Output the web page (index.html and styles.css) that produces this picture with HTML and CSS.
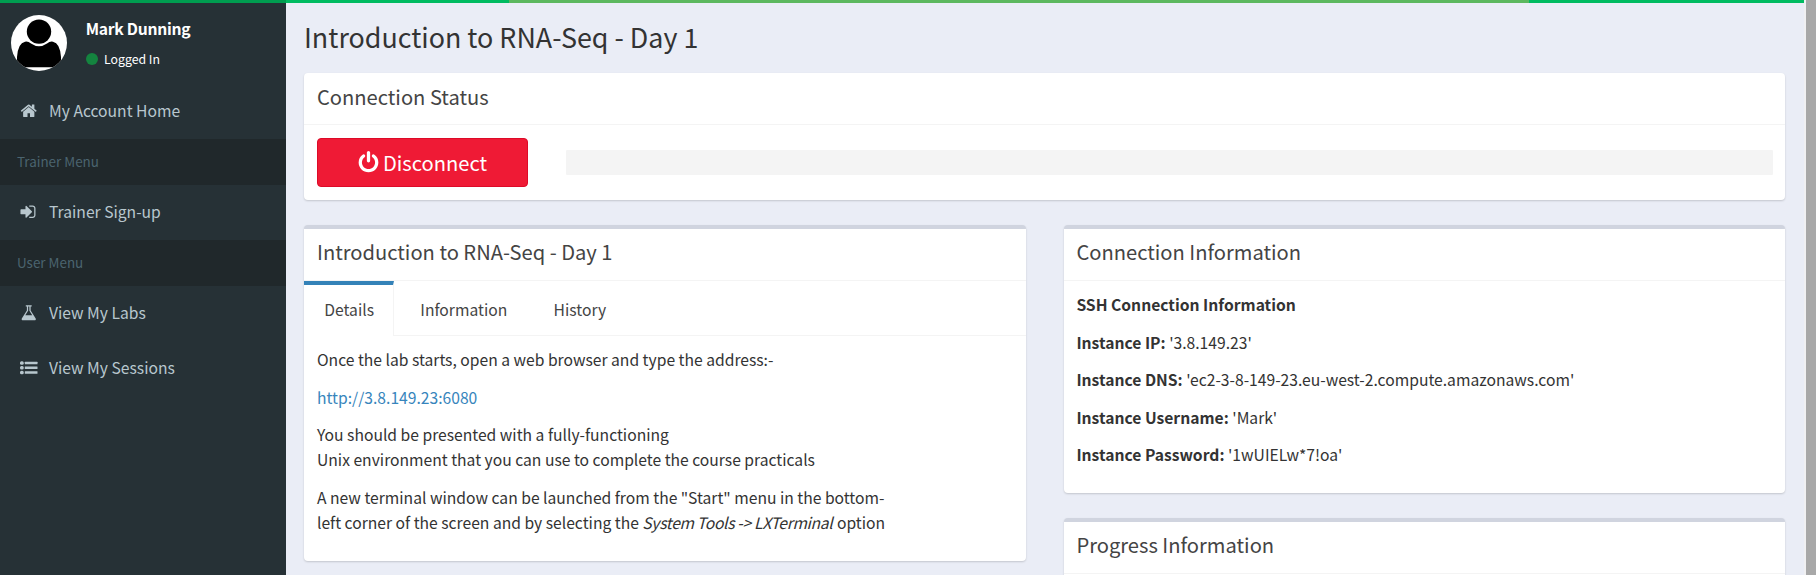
FILE: index.html
```html
<!DOCTYPE html>
<html lang="en">
<head>
<meta charset="utf-8">
<title>Introduction to RNA-Seq - Day 1</title>
<link rel="stylesheet" href="styles.css">
</head>
<body>
<div class="app">
  <div class="loadbar"><span class="seg seg-side"></span><span class="seg seg-a"></span><span class="seg seg-b"></span><span class="seg seg-c"></span></div>
  <aside class="sidebar">
    <div class="user-panel">
      <svg class="avatar" viewBox="0 0 56 56"><defs><clipPath id="round"><circle cx="28" cy="28" r="28"/></clipPath></defs><circle cx="28" cy="28" r="28" fill="#fff"/><g clip-path="url(#round)"><circle cx="28" cy="16.6" r="12.2"/><path d="M6 52.3V42Q7 28 14 26.7Q17 26 20 28.5Q28 34 36 28.5Q39 26 42 26.7Q49 28 50 42V52.3Z"/></g></svg>
      <div class="user-info">
        <p class="user-name">Mark Dunning</p>
        <p class="user-status"><i class="dot"></i>Logged In</p>
      </div>
    </div>
    <nav class="menu">
      <a class="item"><svg class="icon" viewBox="0 0 1792 1792"><path d="M1472 992v480q0 26-19 45t-45 19h-384v-384h-256v384h-384q-26 0-45-19t-19-45v-480q0-1 .5-3t.5-3l575-474 575 474q1 2 1 6zm223-69l-62 74q-8 9-21 11h-3q-13 0-21-7l-692-577-692 577q-12 8-24 7-13-2-21-11l-62-74q-8-10-7-23.5t11-21.5l719-599q32-26 76-26t76 26l244 204v-195q0-14 9-23t23-9h192q14 0 23 9t9 23v408l219 182q10 8 11 21.5t-7 23.5z"/></svg>My Account Home</a>
      <div class="group">Trainer Menu</div>
      <a class="item"><svg class="icon" viewBox="80 0 1792 1792"><path d="M1312 896q0 26-19 45l-544 544q-19 19-45 19t-45-19-19-45v-288h-448q-26 0-45-19t-19-45v-384q0-26 19-45t45-19h448v-288q0-26 19-45t45-19 45 19l544 544q19 19 19 45zm352-352v704q0 119-84.5 203.5t-203.5 84.5h-320q-13 0-22.5-9.5t-9.5-22.5q0-4-1-20t-.5-26.5 3-23.5 10-19.5 20.5-6.5h320q66 0 113-47t47-113v-704q0-66-47-113t-113-47h-312l-11.5-1-11.5-3-8-5.5-7-9-2-13.5q0-4-1-20t-.5-26.5 3-23.5 10-19.5 20.5-6.5h320q119 0 203.5 84.5t84.5 203.5z"/></svg>Trainer Sign-up</a>
      <div class="group">User Menu</div>
      <a class="item"><svg class="icon" viewBox="0 0 1792 1792"><path d="M1591 1448q56 89 21.5 152.5t-140.5 63.5h-1152q-106 0-140.5-63.5t21.5-152.5l503-793v-399h-64q-26 0-45-19t-19-45 19-45 45-19h512q26 0 45 19t19 45-19 45-45 19h-64v399zm-779-725l-272 429h712l-272-429-20-31v-436h-128v436z"/></svg>View My Labs</a>
      <a class="item"><svg class="icon" viewBox="0 0 1792 1792"><rect x="0" y="230" width="384" height="360" rx="160"/><rect x="0" y="716" width="384" height="360" rx="160"/><rect x="0" y="1202" width="384" height="360" rx="160"/><rect x="490" y="280" width="1302" height="260" rx="40"/><rect x="490" y="766" width="1302" height="260" rx="40"/><rect x="490" y="1252" width="1302" height="260" rx="40"/></svg>View My Sessions</a>
    </nav>
  </aside>
  <main class="content">
    <h1 class="page-title">Introduction to RNA-Seq - Day 1</h1>
    <section class="box box-status">
      <h3 class="box-title">Connection Status</h3>
      <div class="status-body">
        <button class="btn"><svg class="power" viewBox="0 0 1792 1792"><path d="M1664 896q0 156-61 298t-164 245-245 164-298 61-298-61-245-164-164-245-61-298q0-182 80.5-343t226.5-270q43-32 95.5-25t83.5 50q32 42 24.5 94.5t-49.5 84.5q-98 74-151.5 181t-53.5 228q0 104 40.5 198.5t109.5 163.5 163.5 109.5 198.5 40.5 198.5-40.5 163.5-109.5 109.5-163.5 40.5-198.5q0-121-53.5-228t-151.5-181q-42-32-49.5-84.5t24.5-94.5q31-43 84-50t95 25q146 109 226.5 270t80.5 343zm-640-768v640q0 52-38 90t-90 38-90-38-38-90v-640q0-52 38-90t90-38 90 38 38 90z"/></svg><span>Disconnect</span></button>
        <div class="progress"></div>
      </div>
    </section>
    <div class="columns">
      <section class="box box-top box-lab">
        <h3 class="box-title">Introduction to RNA-Seq - Day 1</h3>
        <div class="tabs"><a class="tab active">Details</a><a class="tab tab-info">Information</a><a class="tab tab-hist">History</a></div>
        <div class="box-body">
          <p>Once the lab starts, open a web browser and type the address:-</p>
          <p><a class="link">http://3.8.149.23:6080</a></p>
          <p>You should be presented with a fully-functioning<br>Unix environment that you can use to complete the course practicals</p>
          <p>A new terminal window can be launched from the "Start" menu in the bottom-<br>left corner of the screen and by selecting the <em>System Tools -&gt; LXTerminal</em> option</p>
        </div>
      </section>
      <div class="column">
        <section class="box box-top box-conn">
          <h3 class="box-title">Connection Information</h3>
          <div class="box-body">
            <p><b>SSH Connection Information</b></p>
            <p><b>Instance IP:</b> '3.8.149.23'</p>
            <p><b>Instance DNS:</b> 'ec2-3-8-149-23.eu-west-2.compute.amazonaws.com'</p>
            <p><b>Instance Username:</b> 'Mark'</p>
            <p><b>Instance Password:</b> '1wUIELw*7!oa'</p>
          </div>
        </section>
        <section class="box box-top box-prog">
          <h3 class="box-title">Progress Information</h3>
        </section>
      </div>
    </div>
  </main>
  <div class="scrollbar"></div>
</div>
</body>
</html>
```
FILE: styles.css
```css
* { box-sizing: border-box; }
body {
  margin: 0;
  height: 575px;
  overflow: hidden;
  font-family: "Noto Sans CJK SC", "Open Sans", sans-serif;
  font-size: 15.67px;
  line-height: 25px;
  color: #333;
}
p, h1, h3 { margin: 0; }
.app {
  display: grid;
  grid-template-columns: 286px 1518px 12px;
  grid-template-rows: 3px 572px;
  height: 575px;
}
.loadbar { grid-column: 1 / 3; display: flex; }
.seg-side { width: 286px; background: #009d50; }
.seg-a { width: 223px; background: #00bb61; }
.seg-b { width: 1020px; background: #5cb85f; }
.seg-c { flex: 1; background: #00bb61; }
.sidebar { grid-column: 1; grid-row: 2; background: #263136; }
.user-panel { display: flex; height: 81px; padding: 12px 0 0 11px; }
.avatar { width: 56px; height: 56px; }
.user-info { padding-left: 18.7px; color: #fff; }
.user-name { font-weight: 600; padding-top: 1px; letter-spacing: -.27px; }
.user-status { display: flex; align-items: center; padding-top: 7px; font-size: 12.3px; line-height: 22px; }
.dot { width: 12px; height: 12px; border-radius: 50%; background: #14843f; margin-right: 6.3px; }
.menu { display: flex; flex-direction: column; }
.item { display: flex; align-items: center; height: 55px; padding: 0 0 2px 20px; gap: 11.5px; color: #b8c7ce; }
.icon { width: 17.5px; height: 17.5px; fill: #b8c7ce; }
.group { height: 46px; padding: 0 17px; line-height: 44px; font-size: 13.43px; color: #4b646f; background: #20282b; }
.content { grid-column: 2; grid-row: 2; background: #eaedf6; padding: 0 19px 0 18px; overflow: hidden; }
.page-title { font-size: 26.86px; font-weight: 400; line-height: 40px; padding-top: 14px; height: 70px; }
.box { background: #fff; border-radius: 4px; box-shadow: 0 1px 2px rgba(0, 0, 0, .17); }
.box-top { border-top: 4px solid #d0d4df; }
.box-title { height: 52px; padding: 11px 13px 0; font-size: 20.14px; font-weight: 400; line-height: 26px; color: #444; border-bottom: 1px solid #f4f4f4; }
.box-top .box-title { padding-top: 10px; }
.box-status { height: 127px; }
.status-body { display: flex; padding: 13px 12px 0 13px; }
.btn { display: flex; align-items: center; justify-content: center; gap: 3px; width: 211px; height: 49px; padding: 0 1px 1px 0; border: 1px solid #dd0a28; border-radius: 4px; background: #ef1a35; color: #fff; font: inherit; font-size: 20.14px; }
.power { width: 23px; height: 23px; fill: #fff; }
.progress { flex: 1; height: 25px; margin: 12px 0 0 38px; border-radius: 1px; background: #f4f4f4; }
.columns { display: grid; grid-template-columns: 722px 721px; gap: 38px; padding-top: 25px; align-items: start; }
.column { display: grid; gap: 25px; }
.column .box-title, .column .box-body { padding-left: 12.4px; }
.box-lab { height: 336px; }
.box-conn { height: 268px; }
.box-prog { height: 120px; }
.tabs { display: flex; height: 55px; border-bottom: 1px solid #f4f4f4; color: #444; }
.tab { padding: 16px 0 0 26.3px; }
.tab.active { width: 90px; height: 55px; padding: 12px 0 0 20.3px; border-top: 4px solid #3482b8; border-right: 1px solid #f4f4f4; background: #fff; }
.tab-hist { padding-left: 46.3px; }
.box-body { padding: 11px 13px; }
.box-body p { margin-bottom: 12.5px; }
.box-body em { letter-spacing: -.33px; margin-right: 1px; }
.link { color: #3785bc; }
.scrollbar { grid-column: 3; grid-row: 1 / 3; background: #a8a8a8; border-left: 2px solid #f0f0f2; }
```
